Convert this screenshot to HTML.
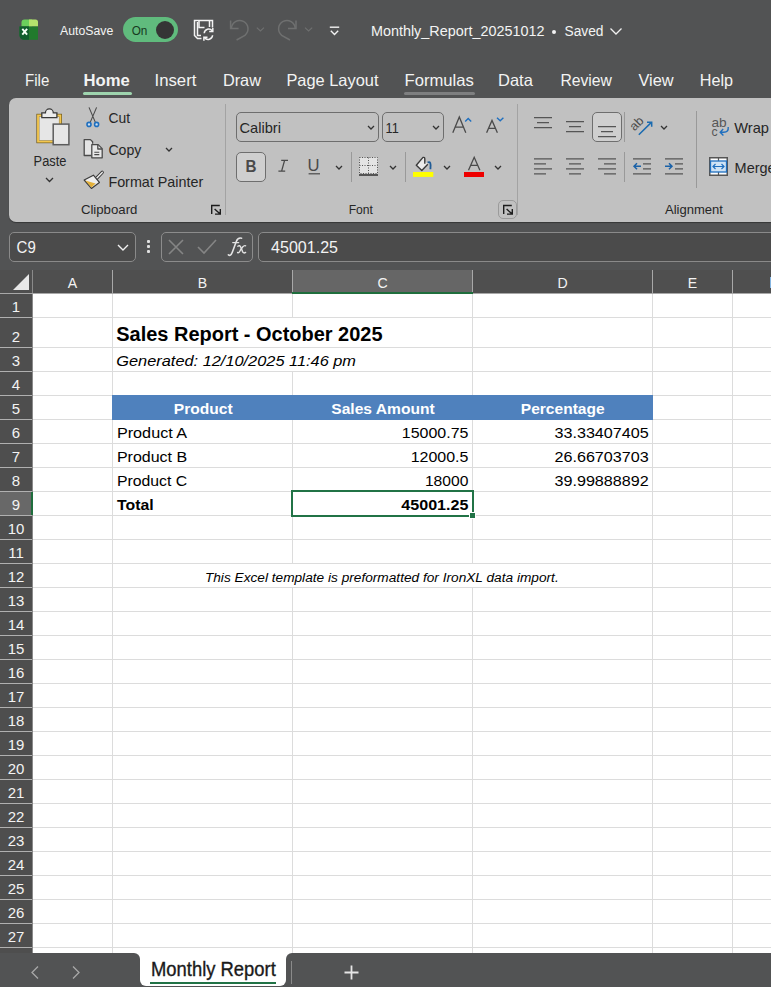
<!DOCTYPE html>
<html><head><meta charset="utf-8">
<style>
*{margin:0;padding:0;box-sizing:border-box}
html,body{width:771px;height:987px;overflow:hidden;background:#525354;font-family:"Liberation Sans",sans-serif}
.a{position:absolute;white-space:nowrap}
.t{color:#f2f2f2}
.r{color:#262626}
svg{position:absolute;overflow:visible}
.vl{position:absolute;width:1px;background:#dcdcdc}
.hl{position:absolute;height:1px;background:#dcdcdc}
.rh{position:absolute;left:0;width:32px;color:#f0f0f0;font-size:15px;text-align:center}
.ch{position:absolute;top:270px;height:23px;color:#f0f0f0;font-size:15px;text-align:center;line-height:23px}
.cell{position:absolute;color:#000;font-size:15px}
</style></head><body>

<!-- ===== Title bar ===== -->
<div id="titlebar">
  <!-- excel logo -->
  <svg style="left:14px;top:14px" width="30" height="30" viewBox="0 0 30 30">
    <path d="M7.5 12.5V8.5a3 3 0 0 1 3-3h7.5v7z" fill="#6bcf5c"/>
    <path d="M15 5.5h6.5a2.5 2.5 0 0 1 2.5 2.5v4.5H15z" fill="#b5e36d"/>
    <path d="M5.5 12.5H24V25.7H10a4.5 4.5 0 0 1-4.5-4.5z" fill="#217a2c"/>
    <path d="M5.5 12.5H15V25.7H10a4.5 4.5 0 0 1-4.5-4.5z" fill="#0f5e2c"/>
    <path d="M8.3 14.8l4.8 5.8M13.1 14.8l-4.8 5.8" stroke="#f4fff4" stroke-width="1.9"/>
  </svg>
  <div class="a" style="left:123px;top:17px;width:55px;height:25px;border-radius:12.5px;background:#60bb7d"></div>
  <div class="a" style="left:156px;top:21px;width:18px;height:18px;border-radius:50%;background:#353535"></div>
  <!-- save icon -->
  <svg style="left:180px;top:10px" width="170" height="40" viewBox="180 10 170 40" fill="none">
    <g stroke="#f4f4f4" stroke-width="1.5" stroke-linejoin="miter">
      <path d="M212.5 27.5V20.5H194.5V35.5L197.5 38.5H201.5"/>
      <path d="M197.5 22V35.5H201"/>
      <path d="M199 21V27.5H204.5M209.5 21V27"/>
      <path d="M204.2 33.2a4.5 4.5 0 0 1 8-2.4"/>
      <path d="M212.8 28V31.5H209.2"/>
      <path d="M212.6 35.3a4.5 4.5 0 0 1-8 2.4"/>
      <path d="M203.9 40.8V37.2H207.5"/>
    </g>
    <g stroke="#6f7070" stroke-width="1.5">
      <path d="M230.6 20.4V28.4H238.6"/>
      <path d="M231.4 28.6A8.3 8.3 0 1 1 244.9 35.3L236.6 40"/>
      <path d="M296 20.4V28.4H288"/>
      <path d="M295.2 28.6A8.3 8.3 0 1 0 281.7 35.3L290 40"/>
    </g>
    <g stroke="#6f7070" stroke-width="1.1">
      <path d="M256.8 27.6l3.6 3.4 3.6-3.4"/>
      <path d="M305 27.6l3.6 3.4 3.6-3.4"/>
    </g>
    <g stroke="#f2f2f2" stroke-width="1.4">
      <path d="M329.8 27.2H339.2"/>
      <path d="M330.8 30.8l3.7 3.7 3.7-3.7"/>
    </g>
  </svg>
  <svg style="left:610px;top:27.5px" width="12" height="7" viewBox="0 0 12 7" fill="none" stroke="#f0f0f0" stroke-width="1.3"><path d="M0.5 0.5l5.5 5.5 5.5-5.5"/></svg>
</div>

<!-- ===== Ribbon tabs ===== -->
<div class="a" style="left:83px;top:92px;width:49px;height:3px;border-radius:2px;background:#9ed4ae"></div>
<div class="a" style="left:404px;top:92px;width:71px;height:3px;border-radius:2px;background:#7e7f80"></div>

<!-- ===== Ribbon body ===== -->
<div class="a" style="left:9px;top:98px;width:780px;height:124px;border-radius:7px;background:#c1c1c1;box-shadow:0 1px 1px rgba(0,0,0,.35)"></div>

<!-- Clipboard group -->
<svg style="left:30px;top:100px" width="45" height="50" viewBox="30 100 45 50">
  <rect x="36.4" y="113.8" width="25.6" height="29.4" fill="#6e5a22"/>
  <rect x="37.1" y="114.5" width="24.2" height="28" fill="#f4c74e"/>
  <rect x="38.9" y="116.3" width="20.6" height="24.4" fill="#9b8a5c"/>
  <rect x="39.5" y="116.9" width="19.4" height="23.2" fill="#e6e6e6"/>
  <path d="M41.8 117.6V112.9H45.4A3.95 3.95 0 0 1 53.3 112.9H56.9V117.6Z" fill="#ececec" stroke="#3a3a3a" stroke-width="1.3"/>
  <rect x="53.2" y="124.1" width="15.7" height="20.6" fill="#e6e6e6" stroke="#5c5c5c" stroke-width="1.5"/>
</svg>
<svg style="left:45px;top:177px" width="9" height="5" viewBox="0 0 9 5" fill="none" stroke="#333" stroke-width="1.3"><path d="M1 1l3.5 3.5L8 1"/></svg>
<svg style="left:80px;top:104px" width="25" height="25" viewBox="80 104 25 25" fill="none">
  <path d="M89 107.4L95.4 122.4M96.6 107.4L90.2 122.4" stroke="#4a4a4a" stroke-width="1.1"/>
  <circle cx="89" cy="124.4" r="2" fill="#cfe0f0" stroke="#1f6fbf" stroke-width="1.6"/>
  <circle cx="96.6" cy="124.4" r="2" fill="#cfe0f0" stroke="#1f6fbf" stroke-width="1.6"/>
</svg>
<svg style="left:80px;top:136px" width="28" height="26" viewBox="80 136 28 26" fill="none" stroke="#4a4a4a" stroke-width="1.3" stroke-linejoin="round">
  <path d="M91.4 155.5H84.2V139.6H90.4L92.6 141.8V143.8" fill="#e4e4e4"/>
  <path d="M91.8 144.6H98.2L102.2 148.6V157.8H91.8Z" fill="#e9e9e9"/>
  <path d="M97.8 144.8V149H102"/>
  <path d="M94.3 152.2H99.3M94.3 154.6H99.3" stroke-width="1.1"/>
</svg>
<svg style="left:165px;top:147px" width="8" height="5" viewBox="0 0 8 5" fill="none" stroke="#333" stroke-width="1.3"><path d="M1 1l3 3 3-3"/></svg>
<svg style="left:80px;top:166px" width="28" height="26" viewBox="80 166 28 26" fill="none">
  <path d="M96.6 178.2L102.2 172.4" stroke="#3a3a3a" stroke-width="3.4" stroke-linecap="round"/>
  <path d="M96.6 178.2L102.2 172.4" stroke="#ececec" stroke-width="1.5" stroke-linecap="round"/>
  <path d="M84.2 180L93.4 175.2L99.4 182.4L91.4 188.4Z" fill="#eeeeee" stroke="#3a3a3a" stroke-width="1.2" stroke-linejoin="round"/>
  <path d="M85.2 180.6L95.6 183.4L91.4 187.6Z" fill="#e3b03a"/>
</svg>
<svg style="left:205px;top:200px" width="20" height="20" viewBox="205 200 20 20" fill="none" stroke="#1c1c1c" stroke-width="1.4"><path d="M211.7 214V205.5H219.8M214.6 209.1L220.2 214.1M215 214.1H220.3V209.1"/></svg>
<div class="a" style="left:225px;top:104px;width:1px;height:111px;background:#a3a3a3"></div>

<!-- Font group -->
<div class="a" style="left:236px;top:112px;width:143px;height:30px;border:1px solid #6e6e6e;border-radius:5px"></div>
<svg style="left:367px;top:125px" width="8" height="5" viewBox="0 0 8 5" fill="none" stroke="#333" stroke-width="1.3"><path d="M1 1l3 3 3-3"/></svg>
<div class="a" style="left:382px;top:112px;width:62px;height:30px;border:1px solid #6e6e6e;border-radius:5px"></div>
<svg style="left:432px;top:125px" width="8" height="5" viewBox="0 0 8 5" fill="none" stroke="#333" stroke-width="1.3"><path d="M1 1l3 3 3-3"/></svg>
<svg style="left:440px;top:108px" width="80" height="40" viewBox="440 108 80 40" fill="none">
  <path d="M452.8 132.8L459.3 116.9L465.8 132.8M455.2 127.2H463.4" stroke="#4a4a4a" stroke-width="1.3"/>
  <path d="M486.6 132.8L492 120.4L497.4 132.8M488.5 128.3H495.5" stroke="#4a4a4a" stroke-width="1.3"/>
  <path d="M465.2 121.6L468.2 118.6L471.2 121.6" stroke="#1f6fbf" stroke-width="1.4"/>
  <path d="M497 117.8L500.2 120.8L503.4 117.8" stroke="#1f6fbf" stroke-width="1.4"/>
</svg>
<div class="a" style="left:236px;top:152px;width:30px;height:30px;border:1px solid #6e6e6e;border-radius:5px;background:#cfcfcf"></div>
<svg style="left:240px;top:150px" width="80" height="30" viewBox="240 150 80 30" font-family="Liberation Sans"><text x="245.6" y="171.6" font-size="16.4" font-weight="bold" fill="#4a4a4a" textLength="11" lengthAdjust="spacingAndGlyphs">B</text>
<path d="M281.2 160.3H288M278.4 171.1H285.2M284.6 160.3L281.6 171.1" stroke="#4a4a4a" stroke-width="1.3" fill="none"/>
<text x="307.6" y="170.7" font-size="16" fill="#4a4a4a" textLength="12" lengthAdjust="spacingAndGlyphs">U</text>
<rect x="308.6" y="173.2" width="11.4" height="1.2" fill="#4a4a4a"/></svg>
<svg style="left:335px;top:165px" width="8" height="5" viewBox="0 0 8 5" fill="none" stroke="#333" stroke-width="1.3"><path d="M1 1l3 3 3-3"/></svg>
<div class="a" style="left:351px;top:152px;width:1px;height:30px;background:#999"></div>
<svg style="left:359px;top:157px" width="19" height="19" viewBox="0 0 19 19" fill="none">
  <rect x="0.5" y="0.5" width="18" height="16" fill="#e4e4e4"/><path d="M0.5 0.5h18v16h-18zM9.5 0.5v16M0.5 8.5h18" stroke="#555" stroke-width="1" stroke-dasharray="1 1.5"/>
  <path d="M0 18h19" stroke="#555" stroke-width="2"/>
</svg>
<svg style="left:389px;top:165px" width="8" height="5" viewBox="0 0 8 5" fill="none" stroke="#333" stroke-width="1.3"><path d="M1 1l3 3 3-3"/></svg>
<div class="a" style="left:405px;top:152px;width:1px;height:30px;background:#999"></div>
<svg style="left:405px;top:150px" width="35" height="30" viewBox="405 150 35 30" fill="none">
  <path d="M423 157.4L416.3 165.2L421.8 170.5L427.8 164.3L424.8 161.3V159Q424.8 157 423 157.4Z" fill="#ebebeb"/>
  <path d="M424.8 163.8V159Q424.8 157 423 157.4L416.3 165.2L421.8 170.5L427.8 164.3" stroke="#3a3a3a" stroke-width="1.4" stroke-linejoin="round"/>
  <path d="M427.6 162.6Q430.3 160.8 430.6 165L430.4 169.2" stroke="#1f5b96" stroke-width="1.8"/>
  <rect x="413" y="172" width="20.3" height="4.9" fill="#ffff00"/>
</svg>
<svg style="left:443px;top:165px" width="8" height="5" viewBox="0 0 8 5" fill="none" stroke="#333" stroke-width="1.3"><path d="M1 1l3 3 3-3"/></svg>
<svg style="left:460px;top:150px" width="30" height="25" viewBox="460 150 30 25" fill="none"><path d="M468.5 170.2L474.2 157.3L479.9 170.2M470.6 165.4H477.8" stroke="#4a4a4a" stroke-width="1.3"/></svg>
<div class="a" style="left:464px;top:172px;width:20px;height:5px;background:#ee0000"></div>
<svg style="left:494px;top:165px" width="8" height="5" viewBox="0 0 8 5" fill="none" stroke="#333" stroke-width="1.3"><path d="M1 1l3 3 3-3"/></svg>
<div class="a" style="left:498px;top:200px;width:19px;height:19px;border:1px solid #8a8a8a;border-radius:5px;opacity:.7"></div>
<svg style="left:497px;top:200px" width="20" height="20" viewBox="497 200 20 20" fill="none" stroke="#1c1c1c" stroke-width="1.4"><path d="M503.7 214V205.5H511.8M506.6 209.1L512.2 214.1M507 214.1H512.3V209.1"/></svg>
<div class="a" style="left:517px;top:104px;width:1px;height:111px;background:#a3a3a3"></div>

<!-- Alignment group -->
<svg style="left:534px;top:116px" width="19" height="13" viewBox="0 0 19 13" stroke="#555" stroke-width="1.35"><path d="M0 1.6h18M3 6.6h12M0 11.6h18"/></svg>
<svg style="left:566px;top:120px" width="19" height="13" viewBox="0 0 19 13" stroke="#555" stroke-width="1.35"><path d="M0 1.6h18M3 6.6h12M0 11.6h18"/></svg>
<div class="a" style="left:592px;top:112px;width:30px;height:30px;border:1px solid #6e6e6e;border-radius:5px;background:#cfcfcf"></div>
<svg style="left:598px;top:125px" width="19" height="13" viewBox="0 0 19 13" stroke="#555" stroke-width="1.35"><path d="M0 1.6h18M3 6.6h12M0 11.6h18"/></svg>
<div class="a" style="left:624px;top:112px;width:1px;height:30px;background:#999"></div>
<svg style="left:626px;top:110px" width="30" height="30" viewBox="626 110 30 30" fill="none">
  <text x="634.6" y="131.4" font-size="12.6" fill="#4e4e4e" font-family="Liberation Sans" transform="rotate(-45 634.6 131.4)">ab</text>
  <path d="M638.8 134.8L651.4 122.4M647 122.3H651.7V126.8" stroke="#1b6bb0" stroke-width="1.5"/>
</svg>
<svg style="left:660px;top:125px" width="8" height="5" viewBox="0 0 8 5" fill="none" stroke="#333" stroke-width="1.3"><path d="M1 1l3 3 3-3"/></svg>

<svg style="left:534px;top:157px" width="19" height="18" viewBox="0 0 19 18" stroke="#555" stroke-width="1.35"><path d="M0 1.8h18M0 6.8h12M0 11.8h18M0 16.8h12"/></svg>
<svg style="left:566px;top:157px" width="19" height="18" viewBox="0 0 19 18" stroke="#555" stroke-width="1.35"><path d="M0 1.8h18M3 6.8h12M0 11.8h18M3 16.8h12"/></svg>
<svg style="left:598px;top:157px" width="19" height="18" viewBox="0 0 19 18" stroke="#555" stroke-width="1.35"><path d="M0 1.8h18M6 6.8h12M0 11.8h18M6 16.8h12"/></svg>
<div class="a" style="left:624px;top:152px;width:1px;height:30px;background:#999"></div>
<svg style="left:633px;top:157px" width="19" height="18" viewBox="0 0 19 18" fill="none"><path d="M0 1.8h18M10 6.8h8M10 11.8h8M0 16.8h18" stroke="#555" stroke-width="1.35"/><path d="M1 9.3h7M4 6.3l-3 3 3 3" stroke="#1b62a8" stroke-width="1.5"/></svg>
<svg style="left:665px;top:157px" width="19" height="18" viewBox="0 0 19 18" fill="none"><path d="M0 1.8h18M10 6.8h8M10 11.8h8M0 16.8h18" stroke="#555" stroke-width="1.35"/><path d="M0 9.3h7M4 6.3l3 3-3 3" stroke="#1b62a8" stroke-width="1.5"/></svg>
<div class="a" style="left:696px;top:111px;width:1px;height:77px;background:#999"></div>
<svg style="left:704px;top:112px" width="30" height="30" viewBox="704 112 30 30" fill="none">
  <text x="711.4" y="126.8" font-size="12.2" fill="#565656" font-family="Liberation Sans" textLength="15.2" lengthAdjust="spacingAndGlyphs">ab</text>
  <text x="711.4" y="135.8" font-size="12.2" fill="#565656" font-family="Liberation Sans">c</text>
  <path d="M728.2 127Q728.8 132.3 723.6 132.2H720.4M723.2 129.1L720.2 132.2L723.4 135.6" stroke="#1f6fbf" stroke-width="1.4"/>
</svg>
<svg style="left:709px;top:157px" width="19" height="19" viewBox="0 0 19 19" fill="none">
  <rect x="0.75" y="0.75" width="17.5" height="17.5" stroke="#555" stroke-width="1.5" fill="#fff"/>
  <path d="M9.5 1v3M9.5 15v3" stroke="#555" stroke-width="1.2"/>
  <rect x="1.5" y="4" width="16" height="11" fill="#cfe3f5" stroke="#1f6fbf" stroke-width="1.3"/>
  <path d="M4 9.5h11M6.5 7l-2.5 2.5 2.5 2.5M12.5 7l2.5 2.5-2.5 2.5" stroke="#1f6fbf" stroke-width="1.2"/>
</svg>

<!-- ===== Formula bar ===== -->
<div class="a" style="left:9px;top:232px;width:127px;height:30px;border:1px solid #8a8a8a;border-radius:5px;background:#4b4b4b"></div>
<svg style="left:117px;top:244px" width="12" height="7" viewBox="0 0 12 7" fill="none" stroke="#f0f0f0" stroke-width="1.4"><path d="M1 1l5 5 5-5"/></svg>
<div class="a" style="left:147px;top:240px;width:3px;height:3px;background:#e0e0e0;border-radius:1px"></div>
<div class="a" style="left:147px;top:245px;width:3px;height:3px;background:#e0e0e0;border-radius:1px"></div>
<div class="a" style="left:147px;top:250px;width:3px;height:3px;background:#e0e0e0;border-radius:1px"></div>
<div class="a" style="left:161px;top:232px;width:92px;height:30px;border:1px solid #8c8c8c;border-radius:5px"></div>
<svg style="left:168px;top:239px" width="16" height="16" viewBox="0 0 16 16" fill="none" stroke="#858585" stroke-width="1.6"><path d="M1 1l14 14M15 1L1 15"/></svg>
<svg style="left:197px;top:239px" width="20" height="16" viewBox="0 0 20 16" fill="none" stroke="#858585" stroke-width="1.6"><path d="M1 8l6 6L19 1"/></svg>
<svg style="left:220px;top:232px" width="35" height="30" viewBox="220 232 35 30" fill="none" stroke="#e4e4e4" stroke-linecap="round">
  <path d="M228.4 254.8Q230.6 256.6 232.3 252.2L236.4 241.2Q237.8 237.4 241.6 238.2" stroke-width="1.6"/>
  <path d="M232.8 242.6H238.6" stroke-width="1.4"/>
  <path d="M237.8 246.2Q239.8 244.8 240.8 247.2L242.6 251.6Q243.6 253.8 245.6 252.4" stroke-width="1.4"/>
  <path d="M245.6 245.8Q244.2 245.2 242.6 247L240.4 250.2Q238.8 253.6 237.6 252.4" stroke-width="1.4"/>
</svg>
<div class="a" style="left:258px;top:232px;width:520px;height:30px;border:1px solid #8a8a8a;border-radius:5px;background:#4b4b4b"></div>

<!-- ===== Column headers ===== -->
<div class="a" style="left:0;top:270px;width:771px;height:24px;background:#4f4f4f"></div>
<div class="a" style="left:293px;top:270px;width:179px;height:23px;background:#666666"></div>
<div class="a" style="left:292px;top:292px;width:181px;height:2px;background:#1f6e3d;z-index:2"></div>
<svg style="left:13px;top:274px" width="17" height="17" viewBox="0 0 17 17"><path d="M16 0V16H0Z" fill="#e8e8e8"/></svg>

<!-- ===== Sheet area ===== -->
<div class="a" style="left:33px;top:294px;width:738px;height:659px;background:#fff"></div>
<div class="a" style="left:0;top:294px;width:32px;height:659px;background:#4e4e4e"></div>

<div class="hl" style="left:33px;top:317px;width:738px"></div>
<div class="a" style="left:0;top:317px;width:32px;height:1px;background:#b0b0b0"></div>
<div class="hl" style="left:33px;top:347px;width:738px"></div>
<div class="a" style="left:0;top:347px;width:32px;height:1px;background:#b0b0b0"></div>
<div class="hl" style="left:33px;top:371px;width:738px"></div>
<div class="a" style="left:0;top:371px;width:32px;height:1px;background:#b0b0b0"></div>
<div class="hl" style="left:33px;top:395px;width:738px"></div>
<div class="a" style="left:0;top:395px;width:32px;height:1px;background:#b0b0b0"></div>
<div class="hl" style="left:33px;top:419px;width:738px"></div>
<div class="a" style="left:0;top:419px;width:32px;height:1px;background:#b0b0b0"></div>
<div class="hl" style="left:33px;top:443px;width:738px"></div>
<div class="a" style="left:0;top:443px;width:32px;height:1px;background:#b0b0b0"></div>
<div class="hl" style="left:33px;top:467px;width:738px"></div>
<div class="a" style="left:0;top:467px;width:32px;height:1px;background:#b0b0b0"></div>
<div class="hl" style="left:33px;top:491px;width:738px"></div>
<div class="a" style="left:0;top:491px;width:32px;height:1px;background:#b0b0b0"></div>
<div class="hl" style="left:33px;top:515px;width:738px"></div>
<div class="a" style="left:0;top:515px;width:32px;height:1px;background:#b0b0b0"></div>
<div class="hl" style="left:33px;top:539px;width:738px"></div>
<div class="a" style="left:0;top:539px;width:32px;height:1px;background:#b0b0b0"></div>
<div class="hl" style="left:33px;top:563px;width:738px"></div>
<div class="a" style="left:0;top:563px;width:32px;height:1px;background:#b0b0b0"></div>
<div class="hl" style="left:33px;top:587px;width:738px"></div>
<div class="a" style="left:0;top:587px;width:32px;height:1px;background:#b0b0b0"></div>
<div class="hl" style="left:33px;top:611px;width:738px"></div>
<div class="a" style="left:0;top:611px;width:32px;height:1px;background:#b0b0b0"></div>
<div class="hl" style="left:33px;top:635px;width:738px"></div>
<div class="a" style="left:0;top:635px;width:32px;height:1px;background:#b0b0b0"></div>
<div class="hl" style="left:33px;top:659px;width:738px"></div>
<div class="a" style="left:0;top:659px;width:32px;height:1px;background:#b0b0b0"></div>
<div class="hl" style="left:33px;top:683px;width:738px"></div>
<div class="a" style="left:0;top:683px;width:32px;height:1px;background:#b0b0b0"></div>
<div class="hl" style="left:33px;top:707px;width:738px"></div>
<div class="a" style="left:0;top:707px;width:32px;height:1px;background:#b0b0b0"></div>
<div class="hl" style="left:33px;top:731px;width:738px"></div>
<div class="a" style="left:0;top:731px;width:32px;height:1px;background:#b0b0b0"></div>
<div class="hl" style="left:33px;top:755px;width:738px"></div>
<div class="a" style="left:0;top:755px;width:32px;height:1px;background:#b0b0b0"></div>
<div class="hl" style="left:33px;top:779px;width:738px"></div>
<div class="a" style="left:0;top:779px;width:32px;height:1px;background:#b0b0b0"></div>
<div class="hl" style="left:33px;top:803px;width:738px"></div>
<div class="a" style="left:0;top:803px;width:32px;height:1px;background:#b0b0b0"></div>
<div class="hl" style="left:33px;top:827px;width:738px"></div>
<div class="a" style="left:0;top:827px;width:32px;height:1px;background:#b0b0b0"></div>
<div class="hl" style="left:33px;top:851px;width:738px"></div>
<div class="a" style="left:0;top:851px;width:32px;height:1px;background:#b0b0b0"></div>
<div class="hl" style="left:33px;top:875px;width:738px"></div>
<div class="a" style="left:0;top:875px;width:32px;height:1px;background:#b0b0b0"></div>
<div class="hl" style="left:33px;top:899px;width:738px"></div>
<div class="a" style="left:0;top:899px;width:32px;height:1px;background:#b0b0b0"></div>
<div class="hl" style="left:33px;top:923px;width:738px"></div>
<div class="a" style="left:0;top:923px;width:32px;height:1px;background:#b0b0b0"></div>
<div class="hl" style="left:33px;top:947px;width:738px"></div>
<div class="a" style="left:0;top:947px;width:32px;height:1px;background:#b0b0b0"></div>
<div class="vl" style="left:112px;top:294px;height:659px"></div>
<div class="a" style="left:112px;top:270px;width:1px;height:23px;background:#a8a8a8"></div>
<div class="vl" style="left:292px;top:294px;height:24px"></div>
<div class="vl" style="left:292px;top:372px;height:192px"></div>
<div class="vl" style="left:292px;top:587px;height:366px"></div>
<div class="a" style="left:292px;top:270px;width:1px;height:23px;background:#a8a8a8"></div>
<div class="vl" style="left:472px;top:294px;height:270px"></div>
<div class="vl" style="left:472px;top:587px;height:366px"></div>
<div class="a" style="left:472px;top:270px;width:1px;height:23px;background:#a8a8a8"></div>
<div class="vl" style="left:652px;top:294px;height:659px"></div>
<div class="a" style="left:652px;top:270px;width:1px;height:23px;background:#a8a8a8"></div>
<div class="vl" style="left:732px;top:294px;height:659px"></div>
<div class="a" style="left:732px;top:270px;width:1px;height:23px;background:#a8a8a8"></div>
<div class="a" style="left:32px;top:270px;width:1px;height:683px;background:#8a8a8a"></div>
<div class="a" style="left:0;top:293px;width:771px;height:1px;background:#a8a8a8"></div>
<div class="a" style="left:0;top:492px;width:32px;height:23px;background:#686868"></div>
<div class="a" style="left:31px;top:492px;width:2px;height:23px;background:#1f6e3d"></div>
<div class="a" style="left:112px;top:395px;width:541px;height:25px;background:#4f81bd"></div>
<div class="a" style="left:291px;top:490px;width:183px;height:27px;border:2px solid #217346"></div>
<div class="a" style="left:469px;top:512px;width:7px;height:7px;background:#217346;border:1px solid #fff"></div>
<div class="a" style="left:551.6px;top:29.6px;width:4px;height:4px;border-radius:50%;background:#f3f3f3"></div>
<!-- ===== Tab bar ===== -->
<div class="a" style="left:134px;top:950px;width:158px;height:12px;background:#fff"></div>
<div class="a" style="left:0;top:953px;width:140px;height:34px;background:#525354;border-top-right-radius:6px"></div>
<div class="a" style="left:286px;top:953px;width:485px;height:34px;background:#525354;border-top-left-radius:6px"></div>
<div class="a" style="left:140px;top:953px;width:146px;height:34px;background:#525354"></div>
<div class="a" style="left:140px;top:950px;width:146px;height:36px;background:#fff;border-radius:0 0 6px 6px"></div>
<div class="a" style="left:150px;top:982px;width:126px;height:2px;background:#217346"></div>
<div class="a" style="left:291px;top:961px;width:1px;height:23px;background:#8a8a8a"></div>
<svg style="left:344px;top:965px" width="15" height="15" viewBox="0 0 15 15" stroke="#e6e6e6" stroke-width="1.8"><path d="M7.5 0.5v14M0.5 7.5h14"/></svg>
<svg style="left:31px;top:966px" width="8" height="13" viewBox="0 0 8 13" fill="none" stroke="#a8a8a8" stroke-width="1.3"><path d="M7 0.5L1 6.5l6 6"/></svg>
<svg style="left:72px;top:966px" width="8" height="13" viewBox="0 0 8 13" fill="none" stroke="#a8a8a8" stroke-width="1.3"><path d="M1 0.5l6 6-6 6"/></svg>
<div class="a" style="left:769.8px;top:277px;width:1.5px;height:11px;background:#86b6e2"></div>

<svg style="left:0;top:0;z-index:5" width="771" height="987" viewBox="0 0 771 987" font-family="Liberation Sans"><text x="60.00" y="34.90" font-size="12.21" fill="#f3f3f3" textLength="53.21" lengthAdjust="spacingAndGlyphs">AutoSave</text>
<text x="131.70" y="34.90" font-size="12.06" fill="#173a22" textLength="15.70" lengthAdjust="spacingAndGlyphs">On</text>
<text x="370.90" y="36.00" font-size="14.39" fill="#f3f3f3" textLength="173.59" lengthAdjust="spacingAndGlyphs">Monthly_Report_20251012</text>
<text x="564.50" y="36.00" font-size="14.39" fill="#f3f3f3" textLength="39.01" lengthAdjust="spacingAndGlyphs">Saved</text>
<text x="25.00" y="85.60" font-size="16.28" fill="#f3f3f3" textLength="24.31" lengthAdjust="spacingAndGlyphs">File</text>
<text x="83.50" y="85.60" font-size="16.28" font-weight="bold" fill="#f3f3f3" textLength="46.21" lengthAdjust="spacingAndGlyphs">Home</text>
<text x="154.50" y="85.60" font-size="16.28" fill="#f3f3f3" textLength="41.90" lengthAdjust="spacingAndGlyphs">Insert</text>
<text x="222.90" y="85.60" font-size="16.28" fill="#f3f3f3" textLength="38.06" lengthAdjust="spacingAndGlyphs">Draw</text>
<text x="286.40" y="85.60" font-size="16.28" fill="#f3f3f3" textLength="92.10" lengthAdjust="spacingAndGlyphs">Page Layout</text>
<text x="404.50" y="85.60" font-size="16.28" fill="#f3f3f3" textLength="69.29" lengthAdjust="spacingAndGlyphs">Formulas</text>
<text x="498.00" y="85.60" font-size="16.28" fill="#f3f3f3" textLength="34.79" lengthAdjust="spacingAndGlyphs">Data</text>
<text x="560.40" y="85.60" font-size="16.28" fill="#f3f3f3" textLength="51.55" lengthAdjust="spacingAndGlyphs">Review</text>
<text x="638.50" y="85.60" font-size="16.28" fill="#f3f3f3" textLength="35.16" lengthAdjust="spacingAndGlyphs">View</text>
<text x="699.70" y="85.60" font-size="16.28" fill="#f3f3f3" textLength="33.29" lengthAdjust="spacingAndGlyphs">Help</text>
<text x="33.60" y="165.50" font-size="14.83" fill="#262626" textLength="32.80" lengthAdjust="spacingAndGlyphs">Paste</text>
<text x="108.40" y="122.90" font-size="14.97" fill="#262626" textLength="21.60" lengthAdjust="spacingAndGlyphs">Cut</text>
<text x="108.40" y="154.90" font-size="14.97" fill="#262626" textLength="32.91" lengthAdjust="spacingAndGlyphs">Copy</text>
<text x="108.40" y="186.90" font-size="14.97" fill="#262626" textLength="94.80" lengthAdjust="spacingAndGlyphs">Format Painter</text>
<text x="80.90" y="213.70" font-size="12.79" fill="#262626" textLength="56.50" lengthAdjust="spacingAndGlyphs">Clipboard</text>
<text x="239.50" y="133.10" font-size="14.97" fill="#262626" textLength="41.50" lengthAdjust="spacingAndGlyphs">Calibri</text>
<text x="385.60" y="132.90" font-size="14.83" fill="#262626" textLength="13.20" lengthAdjust="spacingAndGlyphs">11</text>
<text x="348.70" y="213.70" font-size="12.50" fill="#262626" textLength="24.30" lengthAdjust="spacingAndGlyphs">Font</text>
<text x="734.30" y="132.90" font-size="15.41" fill="#262626" textLength="34.70" lengthAdjust="spacingAndGlyphs">Wrap</text>
<text x="734.60" y="173.00" font-size="15.41" fill="#262626" textLength="41.06" lengthAdjust="spacingAndGlyphs">Merge</text>
<text x="665.00" y="213.50" font-size="12.79" fill="#262626" textLength="58.00" lengthAdjust="spacingAndGlyphs">Alignment</text>
<text x="16.60" y="253.00" font-size="16.72" fill="#f3f3f3" textLength="19.20" lengthAdjust="spacingAndGlyphs">C9</text>
<text x="271.10" y="253.10" font-size="16.72" fill="#f3f3f3" textLength="66.90" lengthAdjust="spacingAndGlyphs">45001.25</text>
<text x="67.79" y="288.10" font-size="14.39" fill="#f3f3f3" textLength="9.42" lengthAdjust="spacingAndGlyphs">A</text>
<text x="197.79" y="288.10" font-size="14.39" fill="#f3f3f3" textLength="9.42" lengthAdjust="spacingAndGlyphs">B</text>
<text x="377.40" y="288.10" font-size="14.39" fill="#f3f3f3" textLength="10.20" lengthAdjust="spacingAndGlyphs">C</text>
<text x="557.40" y="288.10" font-size="14.39" fill="#f3f3f3" textLength="10.20" lengthAdjust="spacingAndGlyphs">D</text>
<text x="687.79" y="288.10" font-size="14.39" fill="#f3f3f3" textLength="9.42" lengthAdjust="spacingAndGlyphs">E</text>
<text x="11.84" y="311.80" font-size="14.97" fill="#f3f3f3">1</text>
<text x="11.84" y="341.80" font-size="14.97" fill="#f3f3f3">2</text>
<text x="11.84" y="365.80" font-size="14.97" fill="#f3f3f3">3</text>
<text x="11.84" y="389.80" font-size="14.97" fill="#f3f3f3">4</text>
<text x="11.84" y="413.80" font-size="14.97" fill="#f3f3f3">5</text>
<text x="11.84" y="437.80" font-size="14.97" fill="#f3f3f3">6</text>
<text x="11.84" y="461.80" font-size="14.97" fill="#f3f3f3">7</text>
<text x="11.84" y="485.80" font-size="14.97" fill="#f3f3f3">8</text>
<text x="11.84" y="509.80" font-size="14.97" fill="#f3f3f3">9</text>
<text x="7.68" y="533.80" font-size="14.97" fill="#f3f3f3">10</text>
<text x="8.23" y="557.80" font-size="14.97" fill="#f3f3f3">11</text>
<text x="7.68" y="581.80" font-size="14.97" fill="#f3f3f3">12</text>
<text x="7.68" y="605.80" font-size="14.97" fill="#f3f3f3">13</text>
<text x="7.68" y="629.80" font-size="14.97" fill="#f3f3f3">14</text>
<text x="7.68" y="653.80" font-size="14.97" fill="#f3f3f3">15</text>
<text x="7.68" y="677.80" font-size="14.97" fill="#f3f3f3">16</text>
<text x="7.68" y="701.80" font-size="14.97" fill="#f3f3f3">17</text>
<text x="7.68" y="725.80" font-size="14.97" fill="#f3f3f3">18</text>
<text x="7.68" y="749.80" font-size="14.97" fill="#f3f3f3">19</text>
<text x="7.68" y="773.80" font-size="14.97" fill="#f3f3f3">20</text>
<text x="7.68" y="797.80" font-size="14.97" fill="#f3f3f3">21</text>
<text x="7.68" y="821.80" font-size="14.97" fill="#f3f3f3">22</text>
<text x="7.68" y="845.80" font-size="14.97" fill="#f3f3f3">23</text>
<text x="7.68" y="869.80" font-size="14.97" fill="#f3f3f3">24</text>
<text x="7.68" y="893.80" font-size="14.97" fill="#f3f3f3">25</text>
<text x="7.68" y="917.80" font-size="14.97" fill="#f3f3f3">26</text>
<text x="7.68" y="941.80" font-size="14.97" fill="#f3f3f3">27</text>
<text x="116.30" y="341.00" font-size="20.35" font-weight="bold" fill="#000" textLength="266.21" lengthAdjust="spacingAndGlyphs">Sales Report - October 2025</text>
<text x="116.30" y="365.70" font-size="15.41" font-style="italic" fill="#000" textLength="239.70" lengthAdjust="spacingAndGlyphs">Generated: 12/10/2025 11:46 pm</text>
<text x="173.80" y="414.00" font-size="14.83" font-weight="bold" fill="#fff" textLength="58.90" lengthAdjust="spacingAndGlyphs">Product</text>
<text x="331.30" y="414.00" font-size="14.83" font-weight="bold" fill="#fff" textLength="103.40" lengthAdjust="spacingAndGlyphs">Sales Amount</text>
<text x="520.80" y="414.00" font-size="14.83" font-weight="bold" fill="#fff" textLength="83.79" lengthAdjust="spacingAndGlyphs">Percentage</text>
<text x="116.90" y="438.00" font-size="14.68" fill="#000" textLength="70.30" lengthAdjust="spacingAndGlyphs">Product A</text>
<text x="401.80" y="438.00" font-size="14.68" fill="#000" textLength="66.60" lengthAdjust="spacingAndGlyphs">15000.75</text>
<text x="554.50" y="438.00" font-size="14.68" fill="#000" textLength="94.21" lengthAdjust="spacingAndGlyphs">33.33407405</text>
<text x="116.90" y="462.00" font-size="14.68" fill="#000" textLength="70.30" lengthAdjust="spacingAndGlyphs">Product B</text>
<text x="410.70" y="462.00" font-size="14.68" fill="#000" textLength="57.70" lengthAdjust="spacingAndGlyphs">12000.5</text>
<text x="554.50" y="462.00" font-size="14.68" fill="#000" textLength="94.21" lengthAdjust="spacingAndGlyphs">26.66703703</text>
<text x="116.90" y="486.00" font-size="14.68" fill="#000" textLength="70.30" lengthAdjust="spacingAndGlyphs">Product C</text>
<text x="424.90" y="486.00" font-size="14.68" fill="#000" textLength="43.50" lengthAdjust="spacingAndGlyphs">18000</text>
<text x="554.50" y="486.00" font-size="14.68" fill="#000" textLength="94.21" lengthAdjust="spacingAndGlyphs">39.99888892</text>
<text x="117.00" y="509.60" font-size="14.83" font-weight="bold" fill="#000" textLength="36.61" lengthAdjust="spacingAndGlyphs">Total</text>
<text x="401.30" y="509.60" font-size="14.83" font-weight="bold" fill="#000" textLength="67.10" lengthAdjust="spacingAndGlyphs">45001.25</text>
<text x="204.90" y="581.70" font-size="12.50" font-style="italic" fill="#000" textLength="353.80" lengthAdjust="spacingAndGlyphs">This Excel template is preformatted for IronXL data import.</text>
<text x="151.00" y="976.00" font-size="19.62" fill="#1a1a1a" textLength="124.80" lengthAdjust="spacingAndGlyphs" stroke="#1a1a1a" stroke-width="0.35">Monthly Report</text></svg>
</body></html>
